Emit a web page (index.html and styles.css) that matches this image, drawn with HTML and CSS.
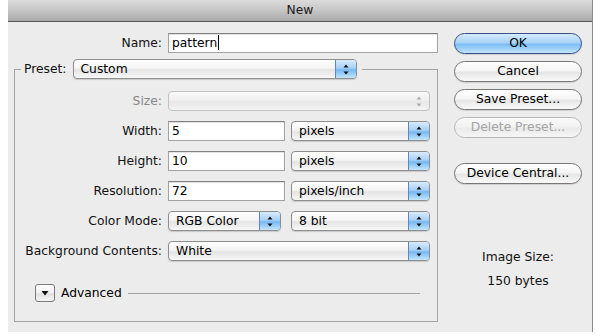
FILE: index.html
```html
<!DOCTYPE html>
<html>
<head>
<meta charset="utf-8">
<link rel="stylesheet" href="styles.css">
</head>
<body>
<div class="window">
  <div class="titlebar">New</div>
  <div class="content">
    <div class="left">
      <div class="name-row">
        <span class="lbl">Name:</span>
        <div class="input wide">pattern<span class="caret"></span></div>
      </div>
      <fieldset class="group">
        <legend><span class="legend-inner"><span class="lbl">Preset:</span>
          <span class="select preset"><span class="val">Custom</span><span class="cap"><svg width="20" height="19" viewBox="0 0 20 19"><path d="M7.5 7.5 L10 4.5 L12.5 7.5Z M7.5 11.5 L10 14.5 L12.5 11.5Z" fill="#111"/></svg></span></span>
        </span></legend>
        <div class="grid">
          <span class="lbl dis">Size:</span>
          <span class="select span2 disabled"><span class="val"></span><span class="cap"><svg width="20" height="19" viewBox="0 0 20 19"><path d="M7.5 7.5 L10 4.5 L12.5 7.5Z M7.5 11.5 L10 14.5 L12.5 11.5Z" fill="#aaa"/></svg></span></span>

          <span class="lbl">Width:</span>
          <div class="input">5</div>
          <span class="select"><span class="val">pixels</span><span class="cap"><svg width="20" height="19" viewBox="0 0 20 19"><path d="M7.5 7.5 L10 4.5 L12.5 7.5Z M7.5 11.5 L10 14.5 L12.5 11.5Z" fill="#111"/></svg></span></span>

          <span class="lbl">Height:</span>
          <div class="input">10</div>
          <span class="select"><span class="val">pixels</span><span class="cap"><svg width="20" height="19" viewBox="0 0 20 19"><path d="M7.5 7.5 L10 4.5 L12.5 7.5Z M7.5 11.5 L10 14.5 L12.5 11.5Z" fill="#111"/></svg></span></span>

          <span class="lbl">Resolution:</span>
          <div class="input">72</div>
          <span class="select"><span class="val">pixels/inch</span><span class="cap"><svg width="20" height="19" viewBox="0 0 20 19"><path d="M7.5 7.5 L10 4.5 L12.5 7.5Z M7.5 11.5 L10 14.5 L12.5 11.5Z" fill="#111"/></svg></span></span>

          <span class="lbl">Color Mode:</span>
          <span class="select narrow"><span class="val">RGB Color</span><span class="cap"><svg width="20" height="19" viewBox="0 0 20 19"><path d="M7.5 7.5 L10 4.5 L12.5 7.5Z M7.5 11.5 L10 14.5 L12.5 11.5Z" fill="#111"/></svg></span></span>
          <span class="select"><span class="val">8 bit</span><span class="cap"><svg width="20" height="19" viewBox="0 0 20 19"><path d="M7.5 7.5 L10 4.5 L12.5 7.5Z M7.5 11.5 L10 14.5 L12.5 11.5Z" fill="#111"/></svg></span></span>

          <span class="lbl">Background Contents:</span>
          <span class="select span2"><span class="val">White</span><span class="cap"><svg width="20" height="19" viewBox="0 0 20 19"><path d="M7.5 7.5 L10 4.5 L12.5 7.5Z M7.5 11.5 L10 14.5 L12.5 11.5Z" fill="#111"/></svg></span></span>
        </div>
        <div class="advanced">
          <span class="disclosure"><svg width="18" height="16" viewBox="0 0 18 16"><path d="M5.5 6 L12.5 6 L9 10.5Z" fill="#111"/></svg></span>
          <span class="adv-text">Advanced</span>
          <span class="adv-line"></span>
        </div>
      </fieldset>
    </div>
    <div class="right">
      <div class="btn default">OK</div>
      <div class="btn">Cancel</div>
      <div class="btn">Save Preset...</div>
      <div class="btn disabled">Delete Preset...</div>
      <div class="btn device">Device Central...</div>
      <div class="imgsize">
        <div>Image Size:</div>
        <div>150 bytes</div>
      </div>
    </div>
  </div>
</div>
</body>
</html>
```

FILE: styles.css
```css
html, body {
  margin: 0;
  padding: 0;
  background: #ffffff;
  overflow: hidden;
}
body {
  width: 600px;
  height: 336px;
  font-family: "DejaVu Sans", "Liberation Sans", sans-serif;
  font-size: 12.3px;
  color: #111;
}
.window {
  margin-left: 8px;
  width: 585px;
  height: 332px;
  background: #ececec;
  border-right: 1px solid #8a8a8a;
  box-sizing: border-box;
}
.titlebar {
  height: 21px;
  line-height: 21px;
  text-align: center;
  background: linear-gradient(#dcdcdc, #c6c6c6 50%, #a9a9a9);
  border-bottom: 1px solid #555;
  color: #1a1a1a;
}
.content {
  display: flex;
  gap: 16px;
  padding-top: 11px;
}
.left {
  width: 430px;
}
.lbl {
  text-align: right;
  white-space: nowrap;
}
.lbl.dis {
  color: #888;
}
.name-row {
  display: grid;
  grid-template-columns: 154px 270px;
  column-gap: 6px;
  align-items: center;
  height: 20px;
}
.input {
  height: 20px;
  box-sizing: border-box;
  background: #fff;
  border: 1px solid #a2a2a2;
  border-top-color: #808080;
  box-shadow: inset 0 1px 1px rgba(0,0,0,0.12);
  padding-left: 3px;
  line-height: 18px;
  color: #000;
}
.caret {
  display: inline-block;
  width: 1px;
  height: 15px;
  background: #000;
  vertical-align: -3px;
  margin-left: 1px;
}
.group {
  margin: 6px 0 0 6px;
  padding: 0 0 19px 0;
  width: 424px;
  box-sizing: border-box;
  border: 1px solid #a3a3a3;
  min-width: 0;
}
.group legend {
  margin-left: 6px;
  padding: 0 5px 0 3px;
}
.legend-inner {
  display: flex;
  align-items: center;
  gap: 6px;
}
.select {
  display: flex;
  height: 20px;
  box-sizing: border-box;
  border: 1px solid #8e8e8e;
  border-radius: 4px;
  background: linear-gradient(#ffffff, #f4f4f4 45%, #e4e4e4 55%, #f7f7f7);
  box-shadow: 0 1px 1px rgba(0,0,0,0.15);
  overflow: hidden;
  color: #000;
}
.select .val {
  flex: 1;
  padding-left: 7px;
  line-height: 18px;
  white-space: nowrap;
}
.select .cap {
  width: 20px;
  flex: none;
  border-left: 1px solid #5e86c2;
  background: linear-gradient(#d9ebfc, #a7d0f6 45%, #76b8f2 55%, #c4e6fe);
  display: flex;
  align-items: center;
  justify-content: center;
}
.select.disabled {
  border-color: #c2c2c2;
  background: linear-gradient(#f8f8f8, #f0f0f0 45%, #e8e8e8 55%, #f4f4f4);
  box-shadow: none;
}
.select.disabled .cap {
  border-left: none;
  background: transparent;
}
.preset {
  width: 284px;
}
.grid {
  display: grid;
  grid-template-columns: 147px 117px 139px;
  column-gap: 6px;
  row-gap: 10px;
  align-items: center;
  padding-top: 12px;
}
.span2 {
  grid-column: 2 / 4;
}
.narrow {
  width: 113px;
}
.advanced {
  display: flex;
  align-items: center;
  margin-top: 23px;
  padding-left: 20px;
  height: 18px;
}
.disclosure {
  width: 20px;
  height: 18px;
  box-sizing: border-box;
  border: 1px solid #7a7a7a;
  border-radius: 3px;
  background: linear-gradient(#ffffff, #efefef 50%, #e0e0e0 55%, #f6f6f6);
  display: flex;
  align-items: center;
  justify-content: center;
}
.adv-text {
  margin-left: 6px;
  color: #000;
}
.adv-line {
  margin-left: 6px;
  width: 292px;
  height: 1px;
  background: #a5a5a5;
}
.right {
  width: 128px;
  display: flex;
  flex-direction: column;
  gap: 7px;
}
.btn {
  height: 21px;
  box-sizing: border-box;
  border: 1px solid #777;
  border-radius: 11px;
  background: linear-gradient(#ffffff, #f5f5f5 45%, #e6e6e6 55%, #fafafa);
  box-shadow: 0 1px 1px rgba(0,0,0,0.12);
  text-align: center;
  line-height: 19px;
  color: #000;
}
.btn.default {
  border-color: #35508a;
  background: linear-gradient(#d6ebfd, #a9d3f7 45%, #7cbdf3 55%, #c0e5fe);
}
.btn.disabled {
  border-color: #b8b8b8;
  color: #a4a4a4;
  background: linear-gradient(#fafafa, #f2f2f2 45%, #eaeaea 55%, #f6f6f6);
  box-shadow: none;
}
.btn.device {
  margin-top: 18px;
}
.imgsize {
  margin-top: 54px;
  text-align: center;
  line-height: 24px;
  color: #111;
}
```
